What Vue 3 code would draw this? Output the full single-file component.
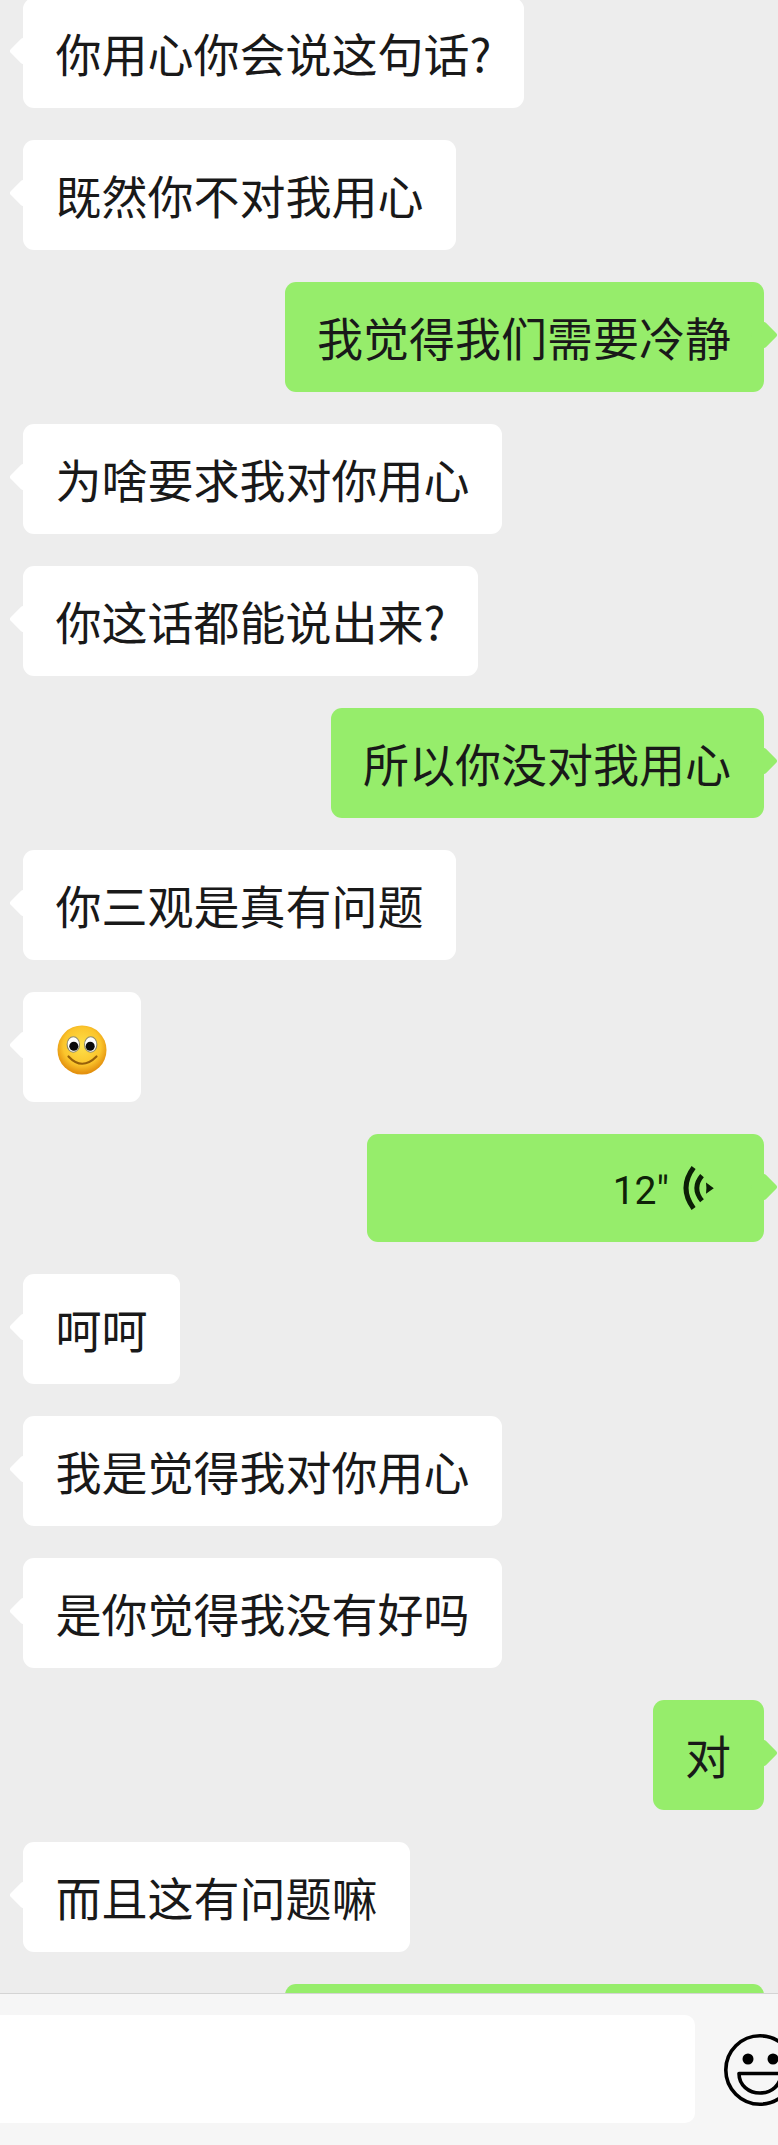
<template>
  <div class="screen">
    <div class="chat">
      <div class="list">
        <div v-for="(m, i) in messages" :key="i" class="row" :class="m.me ? 'me' : 'them'">
          <div class="bubble" :class="m.type">
            <template v-if="m.type === 'sticker'">
              <svg class="face" viewBox="0 0 52 52" width="52" height="52">
                <defs>
                  <radialGradient id="face" cx="50%" cy="42%" r="55%">
                    <stop offset="0%" stop-color="#fde04a" />
                    <stop offset="70%" stop-color="#fbc52c" />
                    <stop offset="100%" stop-color="#e4920f" />
                  </radialGradient>
                </defs>
                <circle cx="26" cy="26" r="24.5" fill="url(#face)" />
                <ellipse cx="17.3" cy="20.5" rx="6.2" ry="7.8" fill="#fff" stroke="#8d8a6c" stroke-width="1.1" />
                <ellipse cx="34.7" cy="20.5" rx="6.2" ry="7.8" fill="#fff" stroke="#8d8a6c" stroke-width="1.1" />
                <circle cx="17.8" cy="22.2" r="4.5" fill="#0b0b0b" />
                <circle cx="34.2" cy="22.2" r="4.5" fill="#0b0b0b" />
                <path d="M12.5 32.5Q26 47 40.5 32.5" fill="none" stroke="#96600a" stroke-width="2.2" stroke-linecap="round" />
              </svg>
            </template>
            <template v-else-if="m.type === 'voice'">
              <span class="secs">{{ m.text }}</span>
              <svg class="wave" viewBox="0 0 40 56" width="40" height="56">
                <path d="M13.6 7.6Q-1.6 28 13.6 48.4" fill="none" stroke="#0c1f06" stroke-width="5" />
                <path d="M22 15.6Q11.6 28 22 40.8" fill="none" stroke="#0c1f06" stroke-width="4.8" />
                <path d="M26 22.6L33.8 28.2L26 33.8Q26.8 28 26 22.6Z" fill="#0c1f06" />
              </svg>
            </template>
            <template v-else>{{ m.text }}</template>
          </div>
        </div>
      </div>
    </div>
    <div class="footer">
      <div class="input"></div>
      <svg class="smile" viewBox="0 0 72 72" width="72" height="72">
        <circle cx="36" cy="36" r="34.2" fill="none" stroke="#000" stroke-width="3.6" />
        <circle cx="24" cy="25" r="5.5" fill="#000" />
        <circle cx="49" cy="25" r="5.5" fill="#000" />
        <path d="M15 39.5H57C57 51 47.5 59 36 59S15 51 15 39.5Z" fill="none" stroke="#000" stroke-width="3.6" stroke-linejoin="round" />
      </svg>
    </div>
  </div>
</template>

<script setup>
const messages = [
  { text: '你用心你会说这句话?' },
  { text: '既然你不对我用心' },
  { text: '我觉得我们需要冷静', me: true },
  { text: '为啥要求我对你用心' },
  { text: '你这话都能说出来?' },
  { text: '所以你没对我用心', me: true },
  { text: '你三观是真有问题' },
  { type: 'sticker' },
  { text: '12"', type: 'voice', me: true },
  { text: '呵呵' },
  { text: '我是觉得我对你用心' },
  { text: '是你觉得我没有好吗' },
  { text: '对', me: true },
  { text: '而且这有问题嘛' },
  { text: '', type: 'cut', me: true }
]
</script>

<style>
html, body {
  margin: 0;
  overflow: hidden;
}
</style>

<style scoped>
.screen {
  width: 778px;
  height: 2145px;
  display: flex;
  flex-direction: column;
  background: #ededed;
  font-family: "Noto Sans CJK SC", "Noto Sans", sans-serif;
  color: #191919;
  overflow: hidden;
}

.chat {
  height: 1993px;
  overflow: hidden;
}

.list {
  margin-top: -2px;
  padding: 0 14.5px 0 23px;
  display: flex;
  flex-direction: column;
  gap: 32px;
}

.row {
  display: flex;
}

.row.me {
  justify-content: flex-end;
}

.bubble {
  position: relative;
  height: 110px;
  box-sizing: border-box;
  padding: 0 32.5px 3px;
  display: flex;
  align-items: center;
  font-size: 46px;
  line-height: 1;
  white-space: nowrap;
  border-radius: 11px;
  background: #fff;
}

.bubble::before {
  content: "";
  position: absolute;
  top: 43px;
  width: 20px;
  height: 20px;
  background: inherit;
  border-radius: 3px;
  transform: rotate(45deg);
}

.them .bubble::before {
  left: -10px;
}

.me .bubble {
  background: #96ed6b;
}

.me .bubble::before {
  right: -10px;
}

.bubble.sticker {
  padding: 6px 33px 0;
}

.face {
  display: block;
}

.bubble.voice {
  width: 397px;
  height: 108px;
  padding: 0 43.5px 0 0;
  justify-content: flex-end;
  gap: 11px;
}

.secs {
  font-family: Roboto, "Liberation Sans", sans-serif;
  font-size: 39px;
  padding-top: 6px;
  color: #0f2208;
}

.wave {
  display: block;
}

.bubble.cut {
  width: 479px;
}

.footer {
  height: 152px;
  box-sizing: border-box;
  border-top: 1px solid #d4d4d4;
  background: #f6f6f6;
  padding-top: 21px;
  display: flex;
  align-items: flex-start;
  overflow: hidden;
}

.input {
  width: 695px;
  height: 108px;
  flex-shrink: 0;
  background: #fff;
  border-radius: 0 10px 10px 0;
}

.smile {
  flex-shrink: 0;
  margin-left: 29px;
  margin-top: 19px;
}
</style>
